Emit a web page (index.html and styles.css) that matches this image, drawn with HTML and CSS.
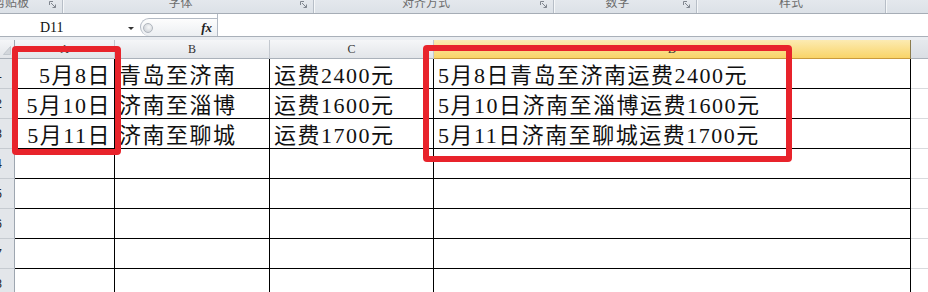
FILE: index.html
```html
<!DOCTYPE html>
<html lang="zh-CN">
<head>
<meta charset="utf-8">
<title>Excel</title>
<link rel="stylesheet" href="styles.css">
</head>
<body>
<div class="app">
  <div class="ribbon">
    <div class="grp g1"><span class="glabel">剪贴板</span><svg class="launch" viewBox="0 0 8 8"><path d="M0.5 4V0.5H4M2 2L6.5 6.5M6.5 3.5V6.5H3.5"/></svg></div>
    <div class="grp g2"><span class="glabel">字体</span><svg class="launch" viewBox="0 0 8 8"><path d="M0.5 4V0.5H4M2 2L6.5 6.5M6.5 3.5V6.5H3.5"/></svg></div>
    <div class="grp g3"><span class="glabel">对齐方式</span><svg class="launch" viewBox="0 0 8 8"><path d="M0.5 4V0.5H4M2 2L6.5 6.5M6.5 3.5V6.5H3.5"/></svg></div>
    <div class="grp g4"><span class="glabel">数字</span><svg class="launch" viewBox="0 0 8 8"><path d="M0.5 4V0.5H4M2 2L6.5 6.5M6.5 3.5V6.5H3.5"/></svg></div>
    <div class="grp g5"><span class="glabel">样式</span></div>
    <div class="grp g6"></div>
  </div>
  <div class="fbar">
    <div class="namebox"><span class="name">D11</span><span class="caret"></span></div>
    <div class="fxctl"><span class="grip"></span><span class="fx">fx</span></div>
    <div class="finput"></div>
  </div>
  <div class="gap"></div>
  <div class="sheet">
    <div class="h corner"><svg class="tri" viewBox="0 0 9 10"><path d="M8.5 0.5V9.5H0.5Z"/></svg></div>
    <div class="h">A</div>
    <div class="h">B</div>
    <div class="h">C</div>
    <div class="h sel">D</div>
    <div class="h e"></div>

    <div class="rh">1</div><div class="c r">5月8日</div><div class="c">青岛至济南</div><div class="c">运费2400元</div><div class="c">5月8日青岛至济南运费2400元</div><div class="ce"></div>
    <div class="rh">2</div><div class="c r">5月10日</div><div class="c">济南至淄博</div><div class="c">运费1600元</div><div class="c">5月10日济南至淄博运费1600元</div><div class="ce"></div>
    <div class="rh">3</div><div class="c r">5月11日</div><div class="c">济南至聊城</div><div class="c">运费1700元</div><div class="c">5月11日济南至聊城运费1700元</div><div class="ce"></div>
    <div class="rh">4</div><div class="c"></div><div class="c"></div><div class="c"></div><div class="c"></div><div class="ce"></div>
    <div class="rh">5</div><div class="c"></div><div class="c"></div><div class="c"></div><div class="c"></div><div class="ce"></div>
    <div class="rh">6</div><div class="c"></div><div class="c"></div><div class="c"></div><div class="c"></div><div class="ce"></div>
    <div class="rh">7</div><div class="c"></div><div class="c"></div><div class="c"></div><div class="c"></div><div class="ce"></div>
    <div class="rh">8</div><div class="c"></div><div class="c"></div><div class="c"></div><div class="c"></div><div class="ce"></div>
  </div>
  <div class="mark m1"></div>
  <div class="mark m2"></div>
</div>
</body>
</html>
```

FILE: styles.css
```css
* { box-sizing: border-box; margin: 0; padding: 0; }
html, body { margin: 0; background: #fff; }
body { width: 928px; height: 292px; overflow: hidden; font-family: "Noto Sans CJK SC", sans-serif; }
.app { position: relative; width: 928px; height: 292px; overflow: hidden; background: #fff; }

/* ribbon group labels */
.ribbon { display: flex; height: 14px; background: linear-gradient(#e4e8ed, #dce1e7); border-bottom: 1px solid #a6adb6; overflow: hidden; }
.grp { display: flex; align-items: flex-start; height: 13px; border-right: 1px solid #b7bec7; box-shadow: inset 1px 0 0 #f5f7f9; overflow: hidden; }
.g1 { width: 63px; box-shadow: none; }
.g2 { width: 251px; }
.g3 { width: 240px; }
.g4 { width: 143px; }
.g5 { width: 189px; }
.g6 { flex: 1; border-right: none; }
.glabel { flex: 1; text-align: center; font-size: 12px; line-height: 12px; margin-top: -4px; color: #6c6c6c; white-space: nowrap; }
.g1 .glabel { text-align: left; margin-left: -7px; }
.launch { width: 8px; height: 8px; margin: 1px 5px 0 2px; flex: none; fill: none; stroke: #80868f; stroke-width: 1; }

/* formula bar */
.fbar { display: flex; height: 23px; background: #fff; border-bottom: 1px solid #a9b0b9; }
.namebox { width: 140px; display: flex; align-items: flex-start; }
.name { font-family: "Liberation Serif", serif; font-size: 14px; line-height: 14px; margin: 7px 0 0 40px; color: #111; }
.caret { width: 0; height: 0; border-left: 3px solid transparent; border-right: 3px solid transparent; border-top: 3px solid #333; margin: 13px 6px 0 auto; }
.fxctl { width: 77px; height: 18px; align-self: flex-end; display: flex; align-items: center; border: 1px solid #b3bac4; border-right: none; border-bottom: none; border-radius: 9px 0 0 9px; background: linear-gradient(#fdfdfd, #eceff2); }
.grip { width: 10px; height: 10px; margin-left: 2px; border-radius: 50%; border: 1px solid #b0b6be; background: radial-gradient(circle at 60% 40%, #f6f7f8, #c6cbd1); }
.fx { margin-left: auto; margin-right: 5px; font-family: "Liberation Serif", serif; font-style: italic; font-weight: bold; font-size: 13px; line-height: 13px; color: #222; }
.finput { flex: 1; border-left: 1px solid #b3bac4; }

.gap { height: 3px; background: #eaedf1; }

/* sheet */
.sheet { display: grid; grid-template-columns: 15px 100px 155px 164px 477px 1fr; grid-template-rows: 19px; grid-auto-rows: 30px; }
.h { display: flex; align-items: center; justify-content: center; background: linear-gradient(#f5f6f8, #e2e5e9); border-right: 1px solid #c3c8cf; border-bottom: 1px solid #aab1ba; font-family: "Liberation Serif", serif; font-size: 12px; color: #333; }
.corner { justify-content: flex-end; align-items: flex-end; padding: 0 3px 3px 0; border-right: 1px solid #9ea6b0; }
.tri { width: 8px; height: 9px; fill: #d3d7dc; stroke: #bfc4cb; stroke-width: 1; }
.sel { background: linear-gradient(#fcebb2, #f9d468); border-bottom: 1px solid #c99a3c; border-right: 1px solid #8c7c4e; }
.e { background: linear-gradient(#e6e9ed, #dadee4); border-right: none; }

.rh { display: flex; align-items: center; justify-content: flex-end; padding-right: 12px; overflow: hidden; background: #e3e6ea; border-right: 1px solid #9ea6b0; border-bottom: 1px solid #c6cbd1; font-family: "Liberation Sans", sans-serif; font-size: 12px; color: #222; }
.c { border-right: 1px solid #000; border-bottom: 1px solid #000; padding: 5px 3px 0 4px; font-family: "Liberation Serif", "Noto Sans CJK SC", serif; font-size: 22px; line-height: 24px; letter-spacing: 1.5px; color: #111; white-space: nowrap; }
.r { text-align: right; }
.ce { border-bottom: 1px solid #d8dadd; }

/* annotation boxes */
.mark { position: absolute; border: 6px solid #e8232b; border-radius: 4px; }
.m1 { left: 12px; top: 46px; width: 109px; height: 109px; }
.m2 { left: 423px; top: 45px; width: 369px; height: 117px; }
```
